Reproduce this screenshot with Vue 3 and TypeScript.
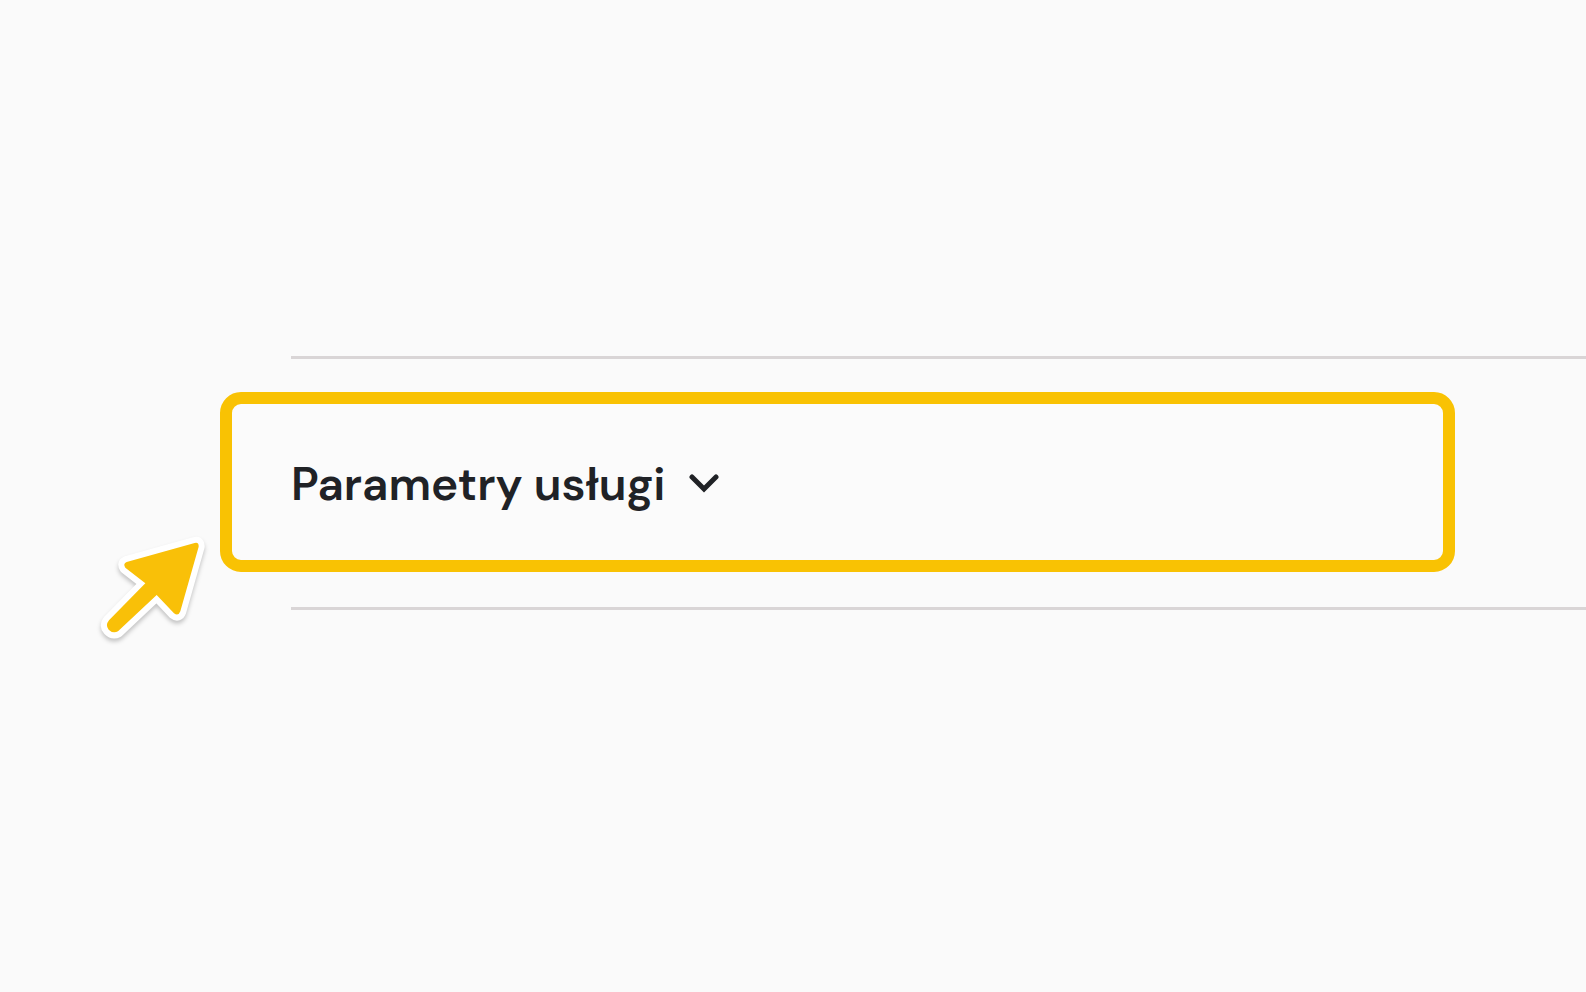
<script setup lang="ts">
import { ref } from 'vue'

const open = ref(false)
const pointerPath =
  'M110 96 L314 39 Q327 36 326 50 L271 244 Q265 260 252 250 L200 195 L84 304 Q69 312 56 299 Q45 286 57 271 L166 160 L106 113 Q98 101 110 96 Z'
</script>

<template>
  <main class="page">
    <section class="row">
      <button class="toggle" type="button" :aria-expanded="open" @click="open = !open">
        <span>Parametry usługi</span>
        <svg class="chevron" :class="{ flipped: open }" viewBox="0 0 30 20" aria-hidden="true">
          <path d="M3 3 L15 15 L27 3" />
        </svg>
      </button>
      <svg class="pointer" viewBox="0 0 390 360" aria-hidden="true">
        <path class="halo" :d="pointerPath" />
        <path class="arrow" :d="pointerPath" />
      </svg>
    </section>
  </main>
</template>

<style>
body {
  background: #fafafa;
}
</style>

<style scoped>
.page {
  padding: 356px 0;
  overflow: hidden;
}

.row {
  position: relative;
  margin-left: 291px;
  padding: 33px 131px 35px 0;
  border: solid #d9d5d6;
  border-width: 3px 0;
}

.toggle {
  box-sizing: border-box;
  display: flex;
  align-items: center;
  gap: 23px;
  width: calc(100% + 71px);
  margin-left: -71px;
  padding: 50px 59px 46px;
  border: 12px solid #f9c203;
  border-radius: 21px;
  background: #fbfbfb;
  color: #202226;
  font: 600 46px/60px "DM Sans", "Open Sans", sans-serif;
  text-align: left;
  cursor: pointer;
}

.chevron {
  width: 30px;
  height: 20px;
  fill: none;
  stroke: currentColor;
  stroke-width: 5;
  stroke-linecap: round;
}

.flipped {
  transform: rotate(180deg);
}

.pointer {
  position: absolute;
  left: -201px;
  top: 171px;
  width: 130px;
  height: 120px;
  overflow: visible;
  filter: drop-shadow(0 3px 2px rgb(0 0 0 / 22%));
  pointer-events: none;
}

.halo {
  fill: #fff;
  stroke: #fff;
  stroke-width: 36;
  stroke-linejoin: round;
}

.arrow {
  fill: #f9c008;
}
</style>
